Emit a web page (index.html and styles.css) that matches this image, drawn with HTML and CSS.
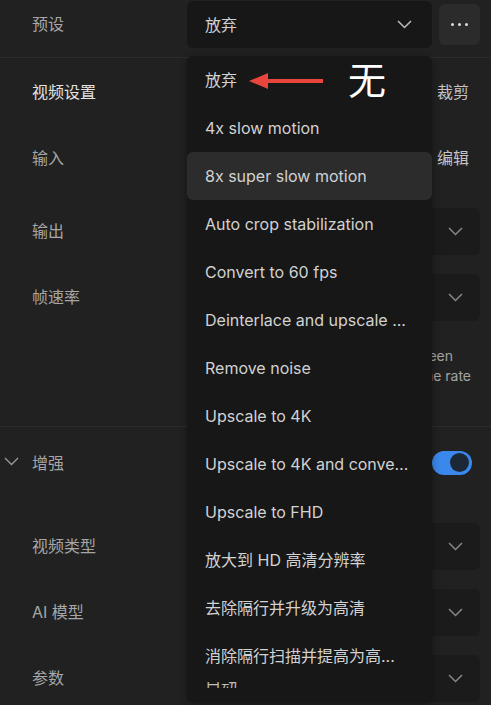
FILE: index.html
```html
<!DOCTYPE html>
<html lang="zh-CN">
<head>
<meta charset="utf-8">
<title>预设</title>
<link rel="stylesheet" href="styles.css">
</head>
<body>
<div class="app">
  <div class="row preset">
    <div class="label">预设</div>
    <div class="ctrl">
      <div class="select select-preset">
        <span class="value">放弃</span>
        <svg class="chev light" width="15" height="9" viewBox="0 0 15 9"><path d="M1 1l6.5 6.5L14 1" fill="none" stroke="currentColor" stroke-width="1.5"/></svg>
      </div>
      <div class="more"><i></i><i></i><i></i></div>
    </div>
  </div>

  <section class="section video">
    <div class="row head">
      <div class="label strong">视频设置</div>
      <div class="ctrl end"><span class="link">裁剪</span></div>
    </div>
    <div class="row input">
      <div class="label">输入</div>
      <div class="ctrl end"><span class="link">编辑</span></div>
    </div>
    <div class="row field first">
      <div class="label">输出</div>
      <div class="ctrl">
        <div class="select">
          <span class="value">原始</span>
          <svg class="chev" width="15" height="9" viewBox="0 0 15 9"><path d="M1 1l6.5 6.5L14 1" fill="none" stroke="currentColor" stroke-width="1.5"/></svg>
        </div>
      </div>
    </div>
    <div class="row field">
      <div class="label">帧速率</div>
      <div class="ctrl">
        <div class="select">
          <span class="value">原始</span>
          <svg class="chev" width="15" height="9" viewBox="0 0 15 9"><path d="M1 1l6.5 6.5L14 1" fill="none" stroke="currentColor" stroke-width="1.5"/></svg>
        </div>
      </div>
    </div>
    <div class="hint">
      <span class="l1">Frames are interpolated in between</span>
      <span class="l2">to reach the chosen frame rate</span>
    </div>
  </section>

  <section class="section enhance">
    <div class="row head">
      <div class="label caret">
        <svg width="15" height="9" viewBox="0 0 15 9"><path d="M1 1l6.5 6.5L14 1" fill="none" stroke="currentColor" stroke-width="1.3"/></svg>
        <span>增强</span>
      </div>
      <div class="ctrl end">
        <div class="toggle"><span class="knob"></span></div>
      </div>
    </div>
    <div class="row field first">
      <div class="label">视频类型</div>
      <div class="ctrl">
        <div class="select">
          <span class="value">逐行</span>
          <svg class="chev" width="15" height="9" viewBox="0 0 15 9"><path d="M1 1l6.5 6.5L14 1" fill="none" stroke="currentColor" stroke-width="1.5"/></svg>
        </div>
      </div>
    </div>
    <div class="row field">
      <div class="label">AI 模型</div>
      <div class="ctrl">
        <div class="select">
          <span class="value">Proteus</span>
          <svg class="chev" width="15" height="9" viewBox="0 0 15 9"><path d="M1 1l6.5 6.5L14 1" fill="none" stroke="currentColor" stroke-width="1.5"/></svg>
        </div>
      </div>
    </div>
    <div class="row field">
      <div class="label">参数</div>
      <div class="ctrl">
        <div class="select">
          <span class="value">自动</span>
          <svg class="chev" width="15" height="9" viewBox="0 0 15 9"><path d="M1 1l6.5 6.5L14 1" fill="none" stroke="currentColor" stroke-width="1.5"/></svg>
        </div>
      </div>
    </div>
  </section>

  <div class="menu">
    <div class="item">放弃</div>
    <div class="item">4x slow motion</div>
    <div class="item active">8x super slow motion</div>
    <div class="item">Auto crop stabilization</div>
    <div class="item">Convert to 60 fps</div>
    <div class="item">Deinterlace and upscale ...</div>
    <div class="item">Remove noise</div>
    <div class="item">Upscale to 4K</div>
    <div class="item">Upscale to 4K and convert to 60 fps</div>
    <div class="item">Upscale to FHD</div>
    <div class="item">放大到 HD 高清分辨率</div>
    <div class="item">去除隔行并升级为高清</div>
    <div class="item">消除隔行扫描并提高为高...</div>
    <div class="peek"><span>自动</span></div>
  </div>

  <div class="annotation">
    <svg class="arrow" width="76" height="20" viewBox="0 0 76 20"><path d="M18 8h56v4H18z" fill="#e8453c"/><path d="M0 10L19 2v16z" fill="#e8453c"/></svg>
    <span class="mark">无</span>
  </div>
</div>
</body>
</html>
```

FILE: styles.css
```css
* { box-sizing: border-box; }

html, body {
  margin: 0;
  padding: 0;
  background: #212121;
}

body {
  width: 491px;
  height: 705px;
  overflow: hidden;
  font-family: "Inter", "Noto Sans CJK SC", sans-serif;
  font-size: 16px;
  color: #a9a9a9;
}

.app {
  position: relative;
  width: 491px;
  height: 705px;
}

.row {
  display: flex;
  align-items: center;
  height: 47px;
}

.label {
  width: 187px;
  flex: none;
  padding-left: 32px;
  padding-bottom: 4px;
  color: #a6a6a6;
  white-space: nowrap;
}

.label.strong {
  color: #e2e2e2;
}

.label.caret {
  display: flex;
  align-items: center;
  gap: 13px;
  padding-left: 4px;
  padding-bottom: 2px;
}

.label.caret svg {
  color: #9a9a9a;
}

.ctrl {
  width: 293px;
  flex: none;
  display: flex;
  align-items: center;
}

.ctrl.end {
  justify-content: flex-end;
}

.link {
  color: #c4c4c4;
  margin-right: 11px;
  padding-bottom: 3px;
}

/* preset row */
.preset {
  height: 58px;
  align-items: flex-start;
  padding-top: 1px;
  border-bottom: 1px solid #2c2c2c;
}

.preset .label {
  height: 47px;
  display: flex;
  align-items: center;
}

.preset .ctrl {
  height: 47px;
}

.select {
  flex: 1;
  height: 47px;
  border-radius: 6px;
  background: #1b1b1b;
  display: flex;
  align-items: center;
  justify-content: space-between;
  padding: 0 17px 0 18px;
  color: #cfcfcf;
}

.select-preset {
  flex: none;
  width: 245px;
  background: #171717;
  padding-right: 20px;
}

.select-preset .value {
  padding-bottom: 2px;
}

.chev {
  color: #868686;
  flex: none;
}

.chev.light {
  color: #bdbdbd;
}

.more {
  width: 41px;
  height: 41px;
  margin-left: 7px;
  border-radius: 6px;
  background: #2b2b2b;
  display: flex;
  align-items: center;
  justify-content: center;
  gap: 3.5px;
}

.more i {
  width: 3.5px;
  height: 3.5px;
  border-radius: 50%;
  background: #dedede;
}

/* sections */
.section {
  border-bottom: 1px solid #2c2c2c;
}

.video .head { margin-top: 11px; }
.video .input { margin-top: 19px; }
.video .field.first { margin-top: 26px; }
.field { margin-top: 19px; }

.hint {
  margin-top: 25px;
  padding-bottom: 40px;
  padding-right: 20px;
  text-align: right;
  font-size: 14px;
  line-height: 20px;
  color: #a3a3a3;
}

.hint span { display: block; }
.hint .l1 { padding-right: 18px; }

.enhance { border-bottom: none; }
.enhance .head { margin-top: 12px; }
.enhance .field.first { margin-top: 37px; }

.toggle {
  width: 40px;
  height: 24px;
  margin-right: 8px;
  border-radius: 12px;
  background: #3b88ec;
  display: flex;
  align-items: center;
  justify-content: flex-end;
  padding-right: 3px;
}

.knob {
  width: 19px;
  height: 19px;
  border-radius: 50%;
  background: #1d2837;
}

/* dropdown menu overlay */
.menu {
  position: absolute;
  left: 187px;
  top: 56px;
  width: 245px;
  height: 646px;
  background: #171717;
  border-radius: 6px;
  box-shadow: 0 2px 8px rgba(0, 0, 0, 0.35);
  overflow: hidden;
}

.item {
  height: 48px;
  line-height: 48px;
  padding: 0 18px;
  color: #d2d2d2;
  white-space: nowrap;
  overflow: hidden;
  text-overflow: ellipsis;
  border-radius: 6px;
}

.item.active {
  background: #2c2c2c;
}

.peek {
  height: 6px;
  margin-top: 2px;
  padding-left: 18px;
  overflow: hidden;
  color: #bdbdbd;
  line-height: 20px;
}

.peek span {
  display: block;
  margin-top: -6px;
}

/* annotation overlay */
.annotation {
  position: absolute;
  left: 249px;
  top: 55px;
  display: flex;
  align-items: center;
  gap: 23px;
}

.arrow {
  display: block;
  margin-top: 6px;
}

.mark {
  font-family: "Noto Sans CJK SC", sans-serif;
  font-size: 38px;
  line-height: 46px;
  color: #ffffff;
}
```
